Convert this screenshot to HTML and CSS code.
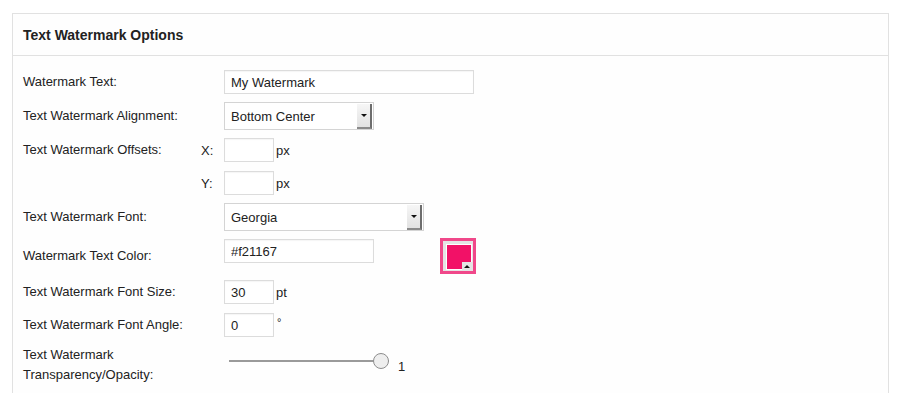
FILE: index.html
```html
<!DOCTYPE html>
<html lang="en">
<head>
  <meta charset="UTF-8">
  <title>Text Watermark Options</title>
  <link rel="stylesheet" href="styles.css">
</head>
<body>
  <div class="panel">
    <h3 class="panel-title">Text Watermark Options</h3>
    <div class="panel-body">
      <div class="row">
        <label class="label">Watermark Text:</label>
        <span class="prefix"></span>
        <input type="text" class="field wide" value="My Watermark">
      </div>
      <div class="row">
        <label class="label">Text Watermark Alignment:</label>
        <span class="prefix"></span>
        <div class="select medium">
          <select><option>Bottom Center</option></select>
          <span class="select-btn"></span>
        </div>
      </div>
      <div class="row">
        <label class="label">Text Watermark Offsets:</label>
        <span class="prefix">X:</span>
        <input type="text" class="field small">
        <span class="unit">px</span>
      </div>
      <div class="row offset-y">
        <label class="label"></label>
        <span class="prefix">Y:</span>
        <input type="text" class="field small">
        <span class="unit">px</span>
      </div>
      <div class="row">
        <label class="label">Text Watermark Font:</label>
        <span class="prefix"></span>
        <div class="select large">
          <select><option>Georgia</option></select>
          <span class="select-btn"></span>
        </div>
      </div>
      <div class="row color-row">
        <label class="label">Watermark Text Color:</label>
        <span class="prefix"></span>
        <input type="text" class="field medium" value="#f21167">
        <span class="swatch"><span class="swatch-fill"><span class="swatch-arrow"></span></span></span>
      </div>
      <div class="row size-row">
        <label class="label">Text Watermark Font Size:</label>
        <span class="prefix"></span>
        <input type="text" class="field small" value="30">
        <span class="unit">pt</span>
      </div>
      <div class="row angle-row">
        <label class="label">Text Watermark Font Angle:</label>
        <span class="prefix"></span>
        <input type="text" class="field small" value="0">
        <span class="unit deg">&deg;</span>
      </div>
      <div class="row slider-row">
        <label class="label">Text Watermark<br>Transparency/Opacity:</label>
        <span class="prefix"></span>
        <input type="range" class="slider" min="0" max="1" step="0.1" value="1">
        <span class="slider-value">1</span>
      </div>
    </div>
  </div>
</body>
</html>
```

FILE: styles.css
```css
/* General Styles */
body {
  font-family: "Liberation Sans", Arial, sans-serif;
  font-size: 13px;
  color: #222;
  margin: 0;
  padding: 13px 12px 0 12px;
  background: #fff;
  overflow: hidden;
}

.panel {
  width: 875px;
  border: 1px solid #e1e1e1;
  border-bottom: none;
  background: #fefefe;
  height: 390px;
}
.panel-title {
  margin: 0;
  height: 41px;
  line-height: 42px;
  padding-left: 10px;
  font-size: 14px;
  font-weight: bold;
  color: #222;
  border-bottom: 1px solid #e1e1e1;
}
.panel-body {
  display: flex;
  flex-direction: column;
  gap: 8px;
  padding: 14px 10px 0 10px;
}

.row {
  display: flex;
  align-items: center;
}
.row.offset-y { margin-top: 1px; }
.row.color-row { margin-top: -1px; }
.row.size-row { margin-top: -2px; }
.row.angle-row { margin-top: 1px; }

.label {
  width: 178px;
  flex-shrink: 0;
  line-height: 20px;
}
.prefix {
  width: 23px;
  flex-shrink: 0;
}

.field {
  box-sizing: border-box;
  height: 24px;
  border: 1px solid #dcdcdc;
  box-shadow: inset 0 1px 1px rgba(0, 0, 0, 0.04);
  padding: 0 6px;
  font-family: inherit;
  font-size: 13px;
  color: #222;
  background: #fff;
  margin: 0;
}
.field.wide { width: 250px; }
.field.medium { width: 150px; }
.field.small { width: 50px; }

.unit {
  margin-left: 2px;
}
.unit.deg {
  align-self: flex-start;
  margin-left: 3px;
  font-size: 11px;
  line-height: 18px;
}

.select {
  box-sizing: border-box;
  display: flex;
  height: 28px;
  border: 1px solid #d4d4d4;
  background: #fff;
}
.select.medium { width: 150px; }
.select.large { width: 200px; }
.select select {
  flex: 1;
  appearance: none;
  -webkit-appearance: none;
  border: none;
  background: transparent;
  font-family: inherit;
  font-size: 13px;
  color: #222;
  padding: 0 6px;
  outline: none;
}
.select-btn {
  width: 13px;
  margin: 1px 1px 0 0;
  background: linear-gradient(#f6f6f6, #e2e2e2);
  border-right: 2px solid #6d6d6d;
  border-bottom: 2px solid #8a8a8a;
  display: flex;
  align-items: center;
  justify-content: center;
}
.select-btn::after {
  content: "";
  border-left: 3px solid transparent;
  border-right: 3px solid transparent;
  border-top: 3px solid #111;
}

.color-row .field {
  align-self: flex-start;
  margin-top: 1px;
}
.swatch {
  box-sizing: border-box;
  width: 36px;
  height: 36px;
  margin-left: 66px;
  border: 3px solid #f0488a;
  background: #e4e4e4;
  padding: 3px;
}
.swatch-fill {
  display: block;
  position: relative;
  width: 24px;
  height: 24px;
  background: #f21167;
  border: 1px solid #fff;
}
.swatch-arrow {
  position: absolute;
  right: -1px;
  bottom: -1px;
  width: 10px;
  height: 8px;
  background: #e4e4e4;
  display: flex;
  align-items: center;
  justify-content: center;
}
.swatch-arrow::after {
  content: "";
  border-left: 3px solid transparent;
  border-right: 3px solid transparent;
  border-bottom: 3px solid #111;
}

.slider {
  -webkit-appearance: none;
  appearance: none;
  width: 160px;
  height: 18px;
  margin: 0 0 0 5px;
  background: transparent;
  position: relative;
  top: -4px;
}
.slider::-webkit-slider-runnable-track {
  height: 2px;
  background: #9a9a9a;
}
.slider::-webkit-slider-thumb {
  -webkit-appearance: none;
  width: 16px;
  height: 16px;
  margin-top: -7px;
  border-radius: 50%;
  border: 1px solid #8d8d8d;
  background: #eee;
  box-sizing: border-box;
}
.slider-value {
  margin-left: 9px;
  position: relative;
  top: 1px;
}
```
